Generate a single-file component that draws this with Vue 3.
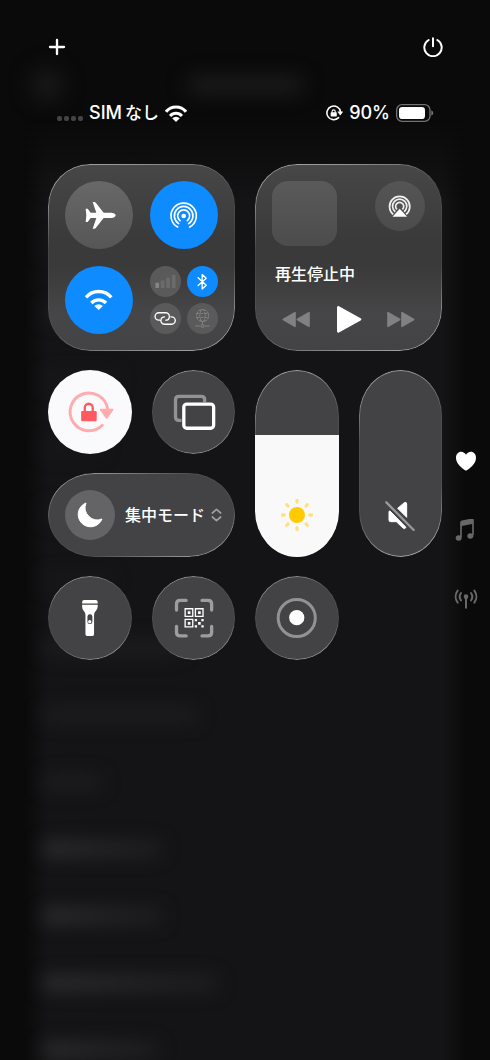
<script setup>
import { ref } from 'vue'

const brightness = ref(65)
const volume = ref(0)
const hazeRows = [
  { tone: 'faint', width: 92 },
  { tone: 'faint', width: 70 },
  { tone: 'dim', width: 76 },
  { tone: 'faint', width: 76 },
  { tone: 'faint', width: 60 },
  { tone: 'faint', width: 82 },
  { tone: 'faint', width: 70 },
  { tone: 'dim', width: 140 },
  { tone: 'dim', width: 156 },
  { tone: 'dim', width: 60 },
  { tone: 'lit', width: 120 },
  { tone: 'lit', width: 120 },
  { tone: 'lit', width: 176 },
  { tone: 'lit', width: 116 },
]
const rays = [0, 45, 90, 135, 180, 225, 270, 315]
</script>

<template>
  <div class="screen">
    <div class="backdrop" aria-hidden="true">
      <div class="backdrop-head">
        <span class="haze-dot"></span>
        <span class="haze-title"></span>
      </div>
      <div class="backdrop-sheet">
        <span
          v-for="(row, i) in hazeRows"
          :key="i"
          class="haze-row"
          :class="row.tone"
          :style="{ width: row.width + 'px' }"
        ></span>
      </div>
    </div>

    <header class="topbar">
      <button type="button" class="plain" aria-label="コントロールを追加">
        <svg width="18" height="18" viewBox="0 0 54 54"><path d="M27 6v42M6 27h42" fill="none" stroke="#fff" stroke-width="7" stroke-linecap="round" /></svg>
      </button>
      <button type="button" class="plain" aria-label="電源">
        <svg width="20" height="20" viewBox="0 0 60 60"><path d="M30 4v24M17 9a26 26 0 1 0 26 0" fill="none" stroke="#fff" stroke-width="6" stroke-linecap="round" /></svg>
      </button>
    </header>

    <div class="status">
      <div class="status-side">
        <span class="dots"><i></i><i></i><i></i><i></i></span>
        <span class="carrier"><span>SIM</span><span class="kana">なし</span></span>
        <svg width="22" height="17" viewBox="133 399 86 66">
          <path d="M137 425A50 50 0 0 1 215 425M153 442A30 30 0 0 1 199 442" fill="none" stroke="#fff" stroke-width="12" />
          <path d="M176 465l-15-14q15-12 30 0z" fill="#fff" />
        </svg>
      </div>
      <div class="status-side">
        <svg width="17" height="16" viewBox="82 94 142 126">
          <path d="M203 147A57 57 0 1 0 187 196" fill="none" stroke="#fff" stroke-width="13" stroke-linecap="round" />
          <path d="M180 147h42l-21 28z" fill="#fff" stroke="#fff" stroke-width="4" />
          <rect x="121" y="151" width="51" height="35" rx="5" fill="#fff" />
          <path d="M133 154v-10a13 13 0 0 1 26 0v10" fill="none" stroke="#fff" stroke-width="9" />
        </svg>
        <span class="percent">90%</span>
        <svg width="38" height="18" viewBox="0 0 114 54">
          <rect x="2" y="2" width="100" height="50" rx="16" fill="none" stroke="#727274" stroke-width="4" />
          <rect x="9" y="9" width="78" height="36" rx="10" fill="#fff" />
          <path d="M106 19q6 3 6 8t-6 8z" fill="#727274" />
        </svg>
      </div>
    </div>

    <div class="body">
      <main class="grid">
        <section class="tile large connect" aria-label="通信">
          <button type="button" class="disc" aria-label="機内モード">
            <svg viewBox="75 75 204 204"><path d="M227 178c0-5-7-8-13-8h-23l-23-29q-2-3-6-3h-4l11 32h-17l-9-12h-6l2 20-2 20h6l9-12h17l-11 32h4q4 0 6-3l23-29h23c6 0 13-3 13-8z" fill="#fff" /></svg>
          </button>
          <button type="button" class="disc on" aria-label="AirDrop">
            <svg viewBox="330 75 204 204">
              <path d="M413 213A38 38 0 1 1 449 213M416 203A28 28 0 1 1 446 203M420 194A18 18 0 1 1 442 194" fill="none" stroke="#fff" stroke-width="5" stroke-linecap="round" />
              <circle cx="431" cy="180" r="7" fill="#fff" />
            </svg>
          </button>
          <button type="button" class="disc on" aria-label="Wi-Fi">
            <svg viewBox="75 331 204 204">
              <path d="M138 425A50 50 0 0 1 214 425M154 442A30 30 0 0 1 198 442" fill="none" stroke="#fff" stroke-width="10" />
              <path d="M176 463l-13-12q13-11 26 0z" fill="#fff" />
            </svg>
          </button>
          <div class="cluster">
            <button type="button" class="disc mini" aria-label="モバイルデータ通信">
              <svg viewBox="330 331 92 92">
                <rect x="346" y="381" width="11" height="15" rx="2" fill="#858586" />
                <g fill="#6b6b6c"><rect x="362" y="374" width="11" height="22" rx="2" /><rect x="378" y="366" width="11" height="30" rx="2" /><rect x="395" y="357" width="11" height="39" rx="2" /></g>
              </svg>
            </button>
            <button type="button" class="disc mini on" aria-label="Bluetooth">
              <svg viewBox="441 331 92 92"><path d="M474 366l24 22-12 11v-43l12 11-24 22" fill="none" stroke="#fff" stroke-width="4" stroke-linejoin="round" stroke-linecap="round" /></svg>
            </button>
            <button type="button" class="disc mini" aria-label="インターネット共有">
              <svg viewBox="330 443 92 92"><path d="M359 494h-3a11 11 0 0 1 0-22h21a11 11 0 0 1 10 15q-2 7-10 7M392 484h2a11 11 0 0 1 0 22h-21a11 11 0 0 1-10-15q2-7 10-7" fill="none" stroke="#fff" stroke-width="4" stroke-linecap="round" /></svg>
            </button>
            <button type="button" class="disc mini" aria-label="VPN">
              <svg viewBox="441 443 92 92" fill="none" stroke="#808081" stroke-width="3">
                <circle cx="487" cy="480" r="18" stroke-dasharray="11 3" />
                <ellipse cx="487" cy="480" rx="8" ry="18" stroke-dasharray="9 3" />
                <path d="M470 474h34M470 486h34" stroke-dasharray="8 3" />
                <path d="M487 498v8M466 511h15M493 511h15" />
                <circle cx="487" cy="511" r="4" />
              </svg>
            </button>
          </div>
        </section>

        <section class="tile large media" aria-label="再生中">
          <div class="media-top">
            <div class="art"></div>
            <button type="button" class="disc cast" aria-label="AirPlay">
              <svg viewBox="391 77 148 148">
                <path d="M445 176A30 30 0 1 1 483 176M451 168A21 21 0 1 1 477 168M456 161A12 12 0 1 1 472 161" fill="none" stroke="#f0f0f0" stroke-width="5" />
                <path d="M443 183l21-24 22 24z" fill="#fff" />
              </svg>
            </button>
          </div>
          <p class="media-title">再生停止中</p>
          <div class="transport">
            <button type="button" class="plain" aria-label="前へ">
              <svg width="29" height="17" viewBox="0 0 87 51"><path d="M4 25.500L39 5v41zM46 25.500L81 5v41z" fill="#818183" stroke="#818183" stroke-width="5" stroke-linejoin="round" /></svg>
            </button>
            <button type="button" class="plain" aria-label="再生">
              <svg width="26" height="29" viewBox="0 0 78 87"><path d="M7 7v72L72 43z" fill="#fff" stroke="#fff" stroke-width="8" stroke-linejoin="round" /></svg>
            </button>
            <button type="button" class="plain" aria-label="次へ">
              <svg width="29" height="17" viewBox="0 0 87 51"><path d="M83 25.500L48 5v41zM41 25.500L6 5v41z" fill="#818183" stroke="#818183" stroke-width="5" stroke-linejoin="round" /></svg>
            </button>
          </div>
        </section>

        <button type="button" class="tile small lit" aria-label="画面の向きをロック">
          <svg viewBox="23 30 252 252">
            <path d="M203 147A57 57 0 1 0 187 196" fill="none" stroke="#ffacaf" stroke-width="9" stroke-linecap="round" />
            <path d="M182 149h36l-18 25z" fill="#ffacaf" stroke="#ffacaf" stroke-width="5" stroke-linejoin="round" />
            <rect x="123" y="153" width="47" height="31" rx="4" fill="#ff5a60" />
            <path d="M134 155v-12a12 12 0 0 1 24 0v12" fill="none" stroke="#ff5a60" stroke-width="7" />
          </svg>
        </button>

        <button type="button" class="tile small" aria-label="画面ミラーリング">
          <svg viewBox="334 30 252 252" fill="none" stroke-width="10">
            <path d="M423 181h-8q-10 0-10-10v-52q0-10 10-10h68q10 0 10 10v7" stroke="#929294" />
            <rect x="430" y="132" width="90" height="73" rx="9" stroke="#fff" />
          </svg>
        </button>

        <div class="tile tall">
          <input
            v-model.number="brightness"
            type="range"
            min="0"
            max="100"
            aria-label="明るさ"
            :style="{ '--level': brightness + '%' }"
          />
          <svg class="slider-icon" viewBox="107 418 96 96">
            <circle cx="155" cy="466" r="24" fill="#ffcb00" />
            <ellipse v-for="angle in rays" :key="angle" cx="155" cy="425" rx="5" ry="8" fill="#ffe07a" :transform="`rotate(${angle} 155 466)`" />
          </svg>
        </div>

        <div class="tile tall">
          <input
            v-model.number="volume"
            type="range"
            min="0"
            max="100"
            aria-label="音量"
            :style="{ '--level': volume + '%' }"
          />
          <svg class="slider-icon" viewBox="419 418 96 96">
            <path d="M460 446l20-17q7-3 7 4v40zM434 455l3-1 48 49q-3 6-9 2l-20-19h-17q-5 0-5-5z" fill="#fff" stroke="#fff" stroke-width="3" stroke-linejoin="round" />
            <path d="M426 428l82 83" stroke="#98989a" stroke-width="7" stroke-linecap="round" />
          </svg>
        </div>

        <button type="button" class="tile focus">
          <span class="focus-disc">
            <svg viewBox="75 392 150 150"><path d="M138 431A37 37 0 1 0 186 479A37 37 0 0 1 138 431z" fill="#fff" stroke="#fff" stroke-width="3" stroke-linejoin="round" /></svg>
          </span>
          <span class="focus-label">集中モード</span>
          <svg width="11" height="14" viewBox="0 0 33 42"><path d="M4 15L16.500 4 29 15M4 27l12.500 11L29 27" fill="none" stroke="#a0a0a2" stroke-width="5" stroke-linecap="round" stroke-linejoin="round" /></svg>
        </button>

        <button type="button" class="tile small" aria-label="フラッシュライト">
          <svg viewBox="23 21 252 252">
            <path d="M126 103v-4q0-6 6-6h35q6 0 6 6v4zM126 107h47v6q0 7-6 13-5 5-5 12v58q0 5-5 5h-16q-5 0-5-5v-58q0-7-5-12-5-6-5-13z" fill="#fff" />
            <rect x="142" y="136" width="15" height="29" rx="7" fill="#454547" />
            <circle cx="149" cy="158" r="5" fill="#fff" />
          </svg>
        </button>

        <button type="button" class="tile small" aria-label="コードスキャナー">
          <svg viewBox="333 21 252 252">
            <path d="M436 94h-18q-11 0-11 11v18M484 94h18q11 0 11 11v18M436 201h-18q-11 0-11-11v-18M484 201h18q11 0 11-11v-18" fill="none" stroke="#9d9d9f" stroke-width="10" stroke-linecap="round" />
            <g fill="none" stroke="#fff" stroke-width="4"><path d="M433 119h23v23h-23zM464 119h23v23h-23zM433 151h23v23h-23z" /></g>
            <path d="M441 127h8v8h-8zM472 127h8v8h-8zM441 159h8v8h-8zM462 150h7v7h-7zM482 150h7v7h-7zM472 159h8v8h-8zM462 169h7v7h-7zM482 169h7v7h-7z" fill="#fff" />
          </svg>
        </button>

        <button type="button" class="tile small" aria-label="画面収録">
          <svg viewBox="644 21 252 252">
            <circle cx="770" cy="147" r="56" fill="none" stroke="#929294" stroke-width="9" />
            <circle cx="770" cy="146" r="23" fill="#fff" />
          </svg>
        </button>
      </main>

      <nav class="pages" aria-label="ページ">
        <button type="button" class="plain" aria-label="よく使う項目">
          <svg width="22" height="20" viewBox="0 0 66 60"><path d="M33 59C20 51 3 38 3 20 3 9 10 2 18 2c7 0 12 4 15 9C36 6 41 2 48 2c8 0 15 7 15 18 0 18-17 31-30 39z" fill="#fff" /></svg>
        </button>
        <button type="button" class="plain" aria-label="ミュージック">
          <svg width="22" height="22" viewBox="0 0 66 66"><path d="M18 54V11q0-3 3-4l30-6q3 0 3 3v44" fill="none" stroke="#68686a" stroke-width="5" /><path d="M18 7l36-6v13l-36 8z" fill="#68686a" /><ellipse cx="11" cy="57" rx="9" ry="8" fill="#68686a" /><ellipse cx="46" cy="51" rx="9" ry="8" fill="#68686a" /></svg>
        </button>
        <button type="button" class="plain" aria-label="通信">
          <svg width="24" height="20" viewBox="0 0 72 60" fill="none" stroke="#68686a" stroke-width="6" stroke-linecap="round"><path d="M11 5a30 30 0 0 0 0 36M21 12a19 19 0 0 0 0 22M61 5a30 30 0 0 1 0 36M51 12a19 19 0 0 1 0 22M36 24v32" /><circle cx="36" cy="23" r="4" fill="#68686a" /></svg>
        </button>
      </nav>
    </div>
  </div>
</template>

<style>
body {
  background: #0a0a0a;
}
</style>

<style scoped>
* {
  box-sizing: border-box;
}
.screen {
  position: relative;
  min-height: 100vh;
  padding-top: 36px;
  overflow: hidden;
  background: #0a0a0a;
  color: #fff;
  font-family: Inter, "Noto Sans CJK JP", sans-serif;
}
button {
  margin: 0;
  padding: 0;
  border: 0;
  background: none;
  color: inherit;
  font: inherit;
  cursor: pointer;
}
svg {
  display: block;
  flex: none;
}
.plain {
  display: flex;
  align-items: center;
  justify-content: center;
}

/* Blurred app underneath */
.backdrop {
  position: absolute;
  inset: 0;
  overflow: hidden;
}
.backdrop-head {
  display: grid;
  grid-template-columns: 1fr 116px 1fr;
  align-items: center;
  height: 120px;
  padding: 50px 30px 0;
  filter: blur(10px);
}
.haze-dot {
  width: 34px;
  height: 34px;
  border-radius: 17px;
  background: #181818;
}
.haze-title {
  height: 14px;
  border-radius: 7px;
  background: #212121;
}
.backdrop-sheet {
  display: flex;
  flex-direction: column;
  gap: 53px;
  min-height: calc(100% - 120px);
  margin: 0 24px;
  padding: 52px 18px 0;
  background: linear-gradient(90deg, #0a0a0a, #141416 24px, #141416 calc(100% - 24px), #0a0a0a);
  mask-image: linear-gradient(transparent, #000 80px);
}
.haze-row {
  flex: none;
  height: 14px;
  border-radius: 7px;
  filter: blur(9px);
}
.haze-row.faint {
  background: #18181a;
}
.haze-row.dim {
  background: #1e1e20;
}
.haze-row.lit {
  background: linear-gradient(90deg, #323234, #262628 60%, #202022);
}

.topbar {
  position: relative;
  display: flex;
  align-items: center;
  justify-content: space-between;
  height: 22px;
  padding: 0 47px 0 48px;
}
.status {
  position: relative;
  display: flex;
  align-items: center;
  justify-content: space-between;
  height: 24px;
  margin-top: 43px;
  padding: 0 56px 0 57px;
  font-size: 18px;
  line-height: 24px;
}
.status-side {
  display: flex;
  align-items: center;
  gap: 6px;
}
.dots {
  display: flex;
  gap: 2px;
  padding-top: 11px;
}
.dots i {
  width: 5px;
  height: 5px;
  border-radius: 2px;
  background: #444446;
}
.carrier {
  display: flex;
  gap: 3px;
}
.carrier,
.percent {
  font-weight: 450;
}
.kana {
  font-size: 17px;
}

.body {
  position: relative;
  display: grid;
  grid-template-columns: 48px 1fr 48px;
  margin-top: 39px;
}
.grid {
  grid-column: 2;
  display: grid;
  grid-template-columns: repeat(4, 1fr);
  grid-auto-rows: 84px;
  gap: 19px 20px;
}
.tile {
  position: relative;
  overflow: hidden;
  border-radius: 42px;
  background: #434345;
}
.tile::after {
  content: "";
  position: absolute;
  inset: 0;
  padding: 1px;
  border-radius: inherit;
  background: linear-gradient(160deg, rgba(255, 255, 255, 0.55), rgba(255, 255, 255, 0.4) 14%, rgba(255, 255, 255, 0.06) 34%, rgba(255, 255, 255, 0.06) 66%, rgba(255, 255, 255, 0.4) 86%, rgba(255, 255, 255, 0.55));
  mask: linear-gradient(#000 0 0) content-box exclude, linear-gradient(#000 0 0);
  pointer-events: none;
}
.small svg {
  width: 100%;
  height: 100%;
}
.lit {
  background: #fafafc;
}
.lit::after {
  display: none;
}
.large {
  grid-column: span 2;
  grid-row: span 2;
  padding: 17px;
  border-radius: 42px;
  background: linear-gradient(#474748, #3a3a3a 40%, #3a3a3a 55%, #464648 80%, #434345);
}
.connect {
  display: grid;
  grid-template-columns: 68px 68px;
  grid-template-rows: 68px 68px;
  justify-content: space-between;
  align-content: space-between;
}
.disc {
  width: 68px;
  height: 68px;
  border-radius: 34px;
  background: linear-gradient(#686869, #565657);
}
.disc svg {
  width: 100%;
  height: 100%;
}
.cluster {
  display: grid;
  grid-template-columns: 31px 31px;
  gap: 6px;
}
.mini {
  width: 31px;
  height: 31px;
  background: #5a5a5b;
}
.disc.on {
  background: #0d8bff;
}
.media {
  display: flex;
  flex-direction: column;
}
.media-top {
  display: flex;
  align-items: flex-start;
  justify-content: space-between;
}
.art {
  width: 65px;
  height: 65px;
  border-radius: 16px;
  background: linear-gradient(#5a5a5b, #4c4c4c);
}
.cast {
  width: 50px;
  height: 50px;
  background: linear-gradient(#555556, #4c4c4c);
}
.media-title {
  margin: 16px 0 0 3px;
  font-size: 16px;
  font-weight: 500;
  line-height: 24px;
}
.transport {
  display: flex;
  align-items: center;
  justify-content: space-between;
  margin-top: 19px;
  padding: 0 10px;
}
.tall {
  grid-row: span 2;
  border-radius: 42px / 46px;
}
.tall input {
  appearance: none;
  display: block;
  width: 100%;
  height: 100%;
  margin: 0;
  writing-mode: vertical-lr;
  direction: rtl;
  background: linear-gradient(to top, #f9f9fa var(--level), #434345 var(--level));
}
.tall input::-webkit-slider-thumb {
  appearance: none;
  width: 84px;
  height: 1px;
}
.slider-icon {
  position: absolute;
  bottom: 26px;
  left: 50%;
  width: 32px;
  height: 32px;
  margin-left: -16px;
  pointer-events: none;
}
.focus {
  grid-column: span 2;
  display: flex;
  align-items: center;
  padding: 0 13px 0 17px;
  border-radius: 46px / 42px;
}
.focus-disc {
  flex: none;
  width: 50px;
  height: 50px;
  border-radius: 25px;
  background: #646466;
}
.focus-label {
  flex: 1;
  padding-left: 10px;
  font-size: 16px;
  font-weight: 500;
  line-height: 24px;
  text-align: left;
  white-space: nowrap;
}
.pages {
  display: flex;
  flex-direction: column;
  align-items: center;
  gap: 45px;
  padding-top: 285px;
}
.pages .plain {
  width: 24px;
  height: 24px;
}
</style>
